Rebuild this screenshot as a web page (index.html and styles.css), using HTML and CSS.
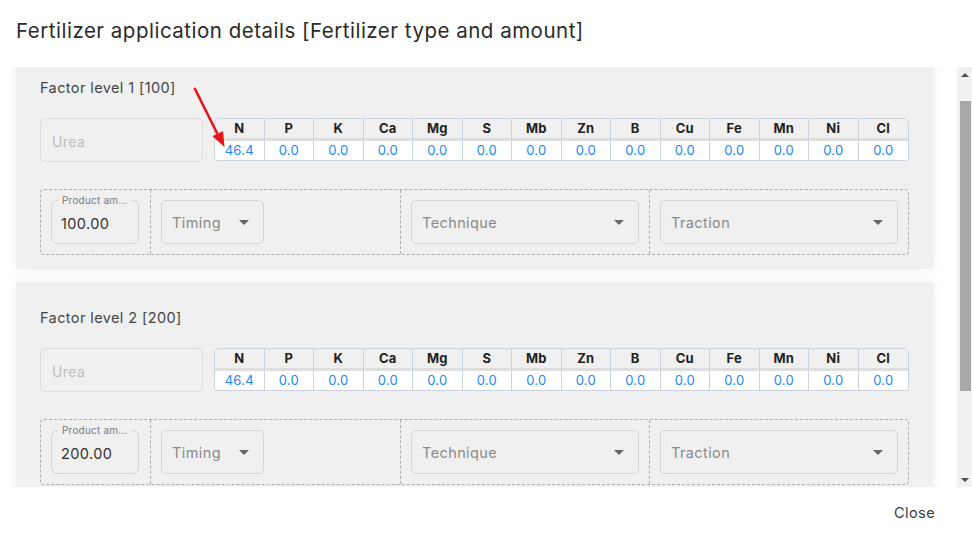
FILE: index.html
```html
<!DOCTYPE html>
<html lang="en">
<head>
<meta charset="utf-8">
<title>Fertilizer application details</title>
<link rel="stylesheet" href="styles.css">
</head>
<body>
<div class="modal">
  <header class="modal-head">
    <h2 class="modal-title">Fertilizer application details [Fertilizer type and amount]</h2>
  </header>
  <div class="modal-body">
    <div class="scroll-area" id="scrollArea">
      <div class="body-inner">
        <section class="card">
          <h3 class="card-title">Factor level 1 [100]</h3>
          <div class="fert-row">
            <div class="field urea">Urea</div>
            <div class="table-wrap">
              <table class="nutrients">
                <thead><tr><th>N</th><th>P</th><th>K</th><th>Ca</th><th>Mg</th><th>S</th><th>Mb</th><th>Zn</th><th>B</th><th>Cu</th><th>Fe</th><th>Mn</th><th>Ni</th><th>Cl</th></tr></thead>
                <tbody><tr><td>46.4</td><td>0.0</td><td>0.0</td><td>0.0</td><td>0.0</td><td>0.0</td><td>0.0</td><td>0.0</td><td>0.0</td><td>0.0</td><td>0.0</td><td>0.0</td><td>0.0</td><td>0.0</td></tr></tbody>
              </table>
            </div>
          </div>
          <div class="app-grid">
            <div class="app-cell">
              <div class="outlined">
                <span class="float-label">Product am...</span>
                <span class="value">100.00</span>
              </div>
            </div>
            <div class="app-cell">
              <div class="select timing"><span>Timing</span><span class="caret"></span></div>
            </div>
            <div class="app-cell">
              <div class="select"><span>Technique</span><span class="caret"></span></div>
            </div>
            <div class="app-cell">
              <div class="select"><span>Traction</span><span class="caret"></span></div>
            </div>
          </div>
          <svg class="pointer-arrow" width="240" height="110" viewBox="0 0 240 110">
            <line x1="179" y1="37" x2="202" y2="83" stroke="#e8161b" stroke-width="2.6" stroke-linecap="round"/>
            <polygon points="207,79 196.5,84.2 208.5,95" fill="#e8161b"/>
          </svg>
        </section>

        <section class="card">
          <h3 class="card-title">Factor level 2 [200]</h3>
          <div class="fert-row">
            <div class="field urea">Urea</div>
            <div class="table-wrap">
              <table class="nutrients">
                <thead><tr><th>N</th><th>P</th><th>K</th><th>Ca</th><th>Mg</th><th>S</th><th>Mb</th><th>Zn</th><th>B</th><th>Cu</th><th>Fe</th><th>Mn</th><th>Ni</th><th>Cl</th></tr></thead>
                <tbody><tr><td>46.4</td><td>0.0</td><td>0.0</td><td>0.0</td><td>0.0</td><td>0.0</td><td>0.0</td><td>0.0</td><td>0.0</td><td>0.0</td><td>0.0</td><td>0.0</td><td>0.0</td><td>0.0</td></tr></tbody>
              </table>
            </div>
          </div>
          <div class="app-grid">
            <div class="app-cell">
              <div class="outlined">
                <span class="float-label">Product am...</span>
                <span class="value">200.00</span>
              </div>
            </div>
            <div class="app-cell">
              <div class="select timing"><span>Timing</span><span class="caret"></span></div>
            </div>
            <div class="app-cell">
              <div class="select"><span>Technique</span><span class="caret"></span></div>
            </div>
            <div class="app-cell">
              <div class="select"><span>Traction</span><span class="caret"></span></div>
            </div>
          </div>
        </section>
      </div>
    </div>
    <div class="scrollbar" aria-hidden="true">
      <div class="sb-btn"><span class="sb-up"></span></div>
      <div class="sb-track"><div class="sb-thumb"></div></div>
      <div class="sb-btn"><span class="sb-down"></span></div>
    </div>
  </div>
  <footer class="modal-foot">
    <button class="btn-close" type="button">Close</button>
  </footer>
</div>
<script src="script.js"></script>
</body>
</html>
```

FILE: styles.css
```css
* { box-sizing: border-box; }

html, body {
  margin: 0;
  padding: 0;
  background: #ffffff;
}

body {
  font-family: Inter, "Open Sans", "Liberation Sans", sans-serif;
  color: #333;
  letter-spacing: 0.4px;
}

.modal {
  width: 972px;
  height: 533px;
  display: flex;
  flex-direction: column;
  background: #fff;
}

.modal-head {
  height: 67px;
  flex: none;
  padding: 18px 16px 0;
}

.modal-title {
  margin: 0;
  font-size: 20.5px;
  line-height: 26px;
  font-weight: 400;
  color: #2b2b2b;
  letter-spacing: 0.5px;
}

.modal-body {
  height: 420px;
  flex: none;
  display: flex;
}

.scroll-area {
  flex: 1;
  overflow: hidden;
}

.body-inner {
  padding: 10px 23px 108px 16px;
  display: flex;
  flex-direction: column;
  gap: 13px;
}

/* custom classic scrollbar */
.scrollbar {
  width: 15px;
  flex: none;
  background: #f1f1f1;
  display: flex;
  flex-direction: column;
}

.sb-btn {
  height: 15px;
  flex: none;
  display: flex;
  align-items: center;
  justify-content: center;
}

.sb-up {
  width: 0;
  height: 0;
  border-left: 4px solid transparent;
  border-right: 4px solid transparent;
  border-bottom: 4px solid #505050;
}

.sb-down {
  width: 0;
  height: 0;
  border-left: 4px solid transparent;
  border-right: 4px solid transparent;
  border-top: 4px solid #505050;
}

.sb-track {
  flex: 1;
  padding: 19px 1px 0 3px;
}

.sb-thumb {
  height: 290px;
  background: #a8a8a8;
}

.card {
  position: relative;
  background: #f0f0f0;
  border-radius: 4px;
  box-shadow: 0 0 14px rgba(0, 0, 0, 0.06);
  padding: 26px 25px 14px 24px;
}

.card-title {
  margin: 0 0 20px;
  font-size: 14.5px;
  line-height: 20px;
  font-weight: 400;
  color: #454545;
}

.fert-row {
  display: flex;
  gap: 11px;
  align-items: flex-start;
}

.field {
  height: 44px;
  border: 1px solid #dcdcdc;
  border-radius: 5px;
  font-size: 14px;
  line-height: 45px;
}

.urea {
  width: 163px;
  flex: none;
  padding-left: 11px;
  color: #bdbdbd;
}

.table-wrap {
  flex: 1;
  min-width: 0;
}

.nutrients {
  width: 100%;
  table-layout: fixed;
  border-collapse: separate;
  border-spacing: 0;
  border: 1px solid #c9d1da;
  border-radius: 5px 5px 3px 3px;
  overflow: hidden;
  font-size: 13px;
  letter-spacing: 0.2px;
}

.nutrients th,
.nutrients td {
  text-align: center;
  padding: 0;
  border-right: 1px solid #c9d1da;
}

.nutrients th:last-child,
.nutrients td:last-child {
  border-right: none;
}

.nutrients th {
  height: 22px;
  font-weight: 700;
  color: #222;
  background: #f0f0f0;
  border-bottom: 3px solid #dedede;
  line-height: 19px;
}

.nutrients td {
  height: 19px;
  line-height: 19px;
  background: #fff;
  color: #2189f5;
  font-weight: 400;
}

.app-grid {
  margin-top: 27px;
  height: 66px;
  border: 1px dashed #ababab;
  border-radius: 4px;
  display: grid;
  grid-template-columns: 109px 250px 249px 1fr;
}

.app-cell {
  padding: 10px;
}

.app-cell + .app-cell {
  border-left: 1px dashed #ababab;
}

.outlined {
  position: relative;
  width: 88px;
  height: 44px;
  border: 1px solid #d4d4d4;
  border-radius: 6px;
  padding: 0 0 0 9px;
  display: flex;
  align-items: center;
}

.float-label {
  position: absolute;
  top: -7px;
  left: 6px;
  padding: 0 4px;
  background: #f0f0f0;
  font-size: 10px;
  line-height: 12px;
  color: #7a7a7a;
  white-space: nowrap;
  letter-spacing: 0.2px;
}

.value {
  font-size: 14.5px;
  color: #333;
  padding-top: 2px;
}

.select {
  height: 44px;
  border: 1px solid #d4d4d4;
  border-radius: 5px;
  padding: 0 14px 0 10px;
  display: flex;
  align-items: center;
  justify-content: space-between;
  font-size: 14.5px;
  color: #8a8a8a;
}

.timing {
  width: 103px;
}

.caret {
  width: 0;
  height: 0;
  border-left: 5px solid transparent;
  border-right: 5px solid transparent;
  border-top: 5px solid #666;
  margin-top: 1px;
}

.pointer-arrow {
  position: absolute;
  left: 0;
  top: 0;
  overflow: visible;
  pointer-events: none;
}

.modal-foot {
  flex: 1;
  display: flex;
  justify-content: flex-end;
  align-items: center;
  padding: 0 37px 0 0;
}

.btn-close {
  border: none;
  background: none;
  padding: 0;
  font-family: inherit;
  font-size: 14.5px;
  letter-spacing: 0.4px;
  color: #3a3a3a;
  line-height: 20px;
  margin-top: 6px;
  cursor: pointer;
}
```

FILE: script.js
```js
document.getElementById('scrollArea').scrollTop = 25;
```
